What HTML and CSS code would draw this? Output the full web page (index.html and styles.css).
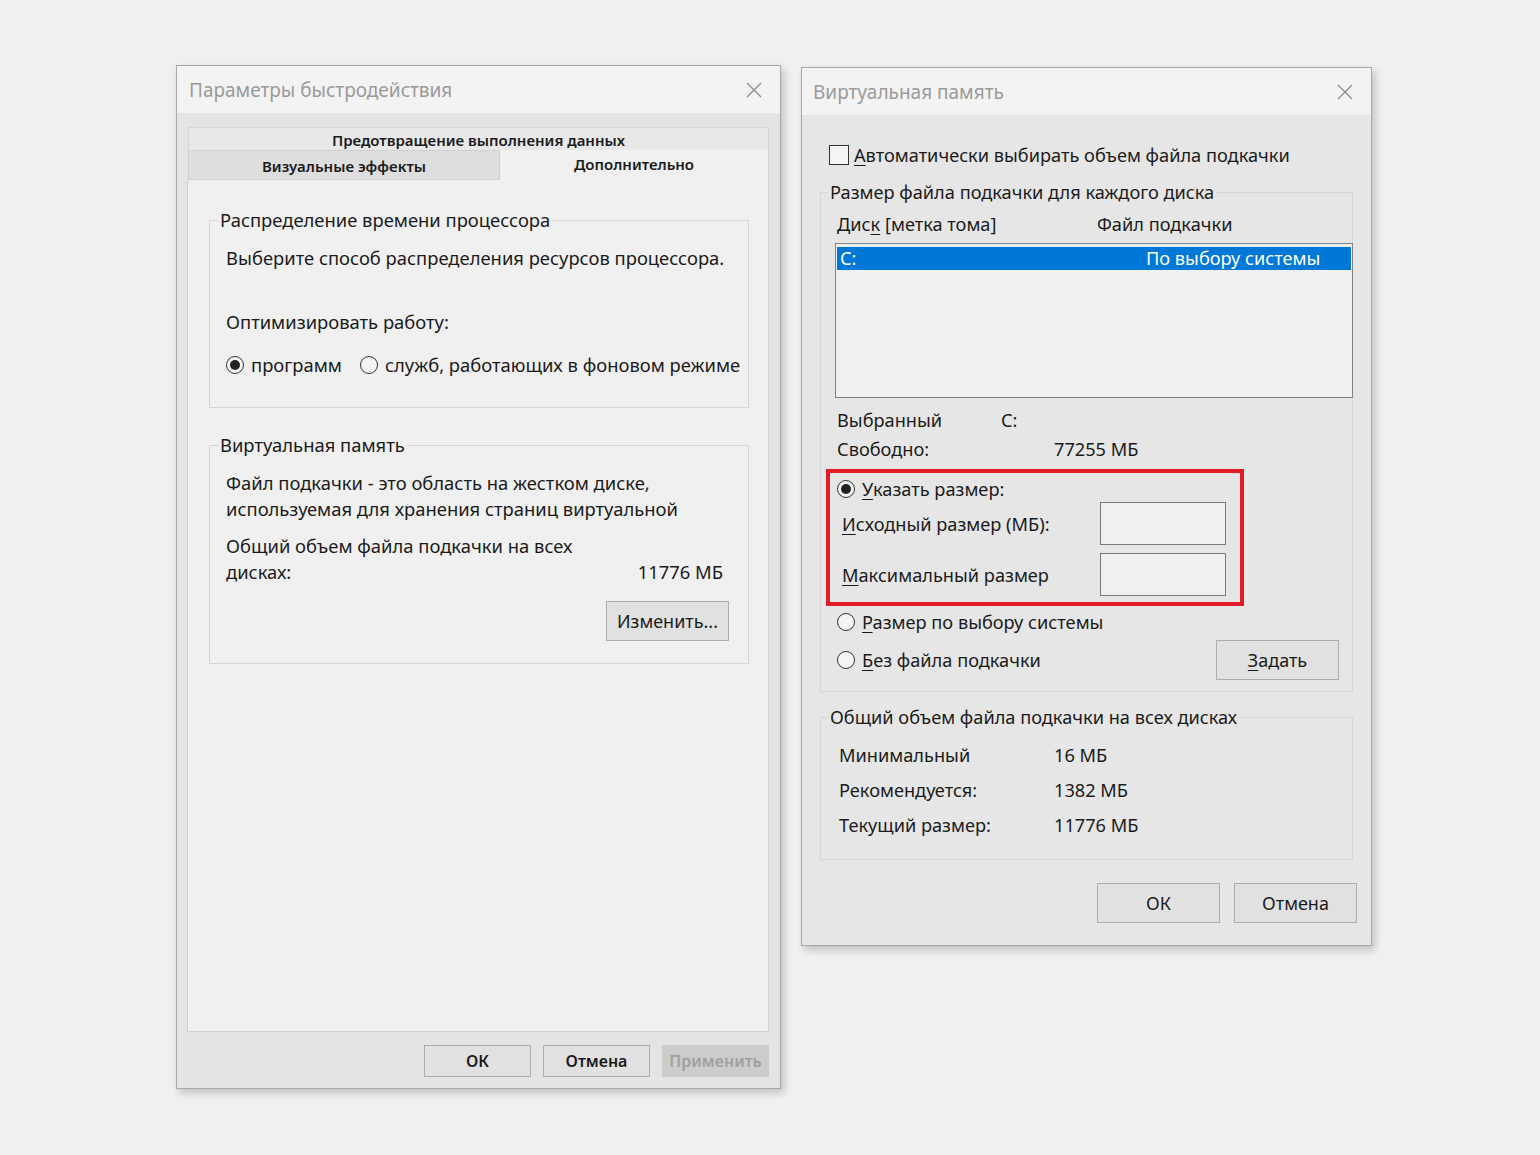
FILE: index.html
```html
<!DOCTYPE html>
<html lang="ru">
<head>
    <meta charset="UTF-8">
    <title>Параметры быстродействия</title>
    <link rel="stylesheet" href="styles.css">
</head>
<body>
    <div class="desk">
        <!-- Performance options dialog -->
        <div class="dialog perf">
            <div class="titlebar">
                <span class="title">Параметры быстродействия</span>
                <svg class="close" viewBox="0 0 16 16"><path d="M1 1L15 15M15 1L1 15"/></svg>
            </div>
            <div class="dialog-body">
                <div class="tabs">
                    <div class="tab tab-wide">Предотвращение выполнения данных</div>
                    <div class="tab-row">
                        <div class="tab tab-visual">Визуальные эффекты</div>
                        <div class="tab tab-active">Дополнительно</div>
                    </div>
                </div>
                <div class="tab-panel">
                    <fieldset class="group cpu">
                        <legend>Распределение времени процессора</legend>
                        <p class="cpu-text">Выберите способ распределения ресурсов процессора.</p>
                        <p class="cpu-opt">Оптимизировать работу:</p>
                        <div class="cpu-radios">
                            <label class="radio-line"><span class="radio checked"></span>программ</label>
                            <label class="radio-line"><span class="radio"></span>служб, работающих в фоновом режиме</label>
                        </div>
                    </fieldset>
                    <fieldset class="group vm">
                        <legend>Виртуальная память</legend>
                        <p class="vm-text">Файл подкачки - это область на жестком диске,<br>используемая для хранения страниц виртуальной</p>
                        <div class="vm-total">
                            <div>Общий объем файла подкачки на всех</div>
                            <div class="vm-total-row"><span>дисках:</span><span>11776 МБ</span></div>
                        </div>
                        <div class="vm-actions">
                            <button class="btn btn-big">Изменить...</button>
                        </div>
                    </fieldset>
                </div>
                <div class="footer perf-footer">
                    <button class="btn btn-small">ОК</button>
                    <button class="btn btn-small">Отмена</button>
                    <button class="btn btn-small disabled">Применить</button>
                </div>
            </div>
        </div>

        <!-- Virtual memory dialog -->
        <div class="dialog vmem">
            <div class="titlebar">
                <span class="title">Виртуальная память</span>
                <svg class="close" viewBox="0 0 16 16"><path d="M1 1L15 15M15 1L1 15"/></svg>
            </div>
            <div class="dialog-body vmem-body">
                <label class="check-line"><span class="checkbox"></span><span><u>А</u>втоматически выбирать объем файла подкачки</span></label>

                <fieldset class="group drives">
                    <legend>Размер файла подкачки для каждого диска</legend>
                    <div class="list-head"><span>Дис<u>к</u> [метка тома]</span><span>Файл подкачки</span></div>
                    <div class="drive-list">
                        <div class="drive-row selected"><span>C:</span><span>По выбору системы</span></div>
                    </div>
                    <div class="info-row first"><span>Выбранный</span><span>C:</span></div>
                    <div class="info-row"><span>Свободно:</span><span>77255 МБ</span></div>

                    <div class="highlight">
                        <label class="radio-line"><span class="radio checked"></span><span><u>У</u>казать размер:</span></label>
                        <div class="size-row first"><span class="size-label"><u>И</u>сходный размер (МБ):</span><span class="size-input"></span></div>
                        <div class="size-row"><span class="size-label"><u>М</u>аксимальный размер</span><span class="size-input"></span></div>
                    </div>

                    <label class="radio-line sys"><span class="radio"></span><span><u>Р</u>азмер по выбору системы</span></label>
                    <div class="nofile-row">
                        <label class="radio-line"><span class="radio"></span><span><u>Б</u>ез файла подкачки</span></label>
                        <button class="btn btn-big set"><u>З</u>адать</button>
                    </div>
                </fieldset>

                <fieldset class="group totals">
                    <legend>Общий объем файла подкачки на всех дисках</legend>
                    <div class="total-row first"><span>Минимальный</span><span>16 МБ</span></div>
                    <div class="total-row"><span>Рекомендуется:</span><span>1382 МБ</span></div>
                    <div class="total-row"><span>Текущий размер:</span><span>11776 МБ</span></div>
                </fieldset>

                <div class="footer vmem-footer">
                    <button class="btn btn-big">ОК</button>
                    <button class="btn btn-big">Отмена</button>
                </div>
            </div>
        </div>
    </div>
</body>
</html>
```

FILE: styles.css
```css
* {
    box-sizing: border-box;
}

body {
    margin: 0;
    background-color: #f0f0f0;
    font-family: "Noto Sans", "Open Sans", sans-serif;
    font-size: 18px;
    color: #1b1b1b;
}

p {
    margin: 0;
}

u {
    text-decoration-thickness: 1px;
    text-underline-offset: 3px;
}

.desk {
    display: flex;
    align-items: flex-start;
    gap: 20px;
    padding: 65px 0 0 176px;
    height: 1155px;
}

/* Dialog frame */
.dialog {
    display: flex;
    flex-direction: column;
    border: 1px solid #a8a8a8;
    background-color: #e4e4e4;
    box-shadow: 3px 4px 8px rgba(0,0,0,0.2);
}

.perf {
    width: 605px;
    height: 1024px;
}

.vmem {
    width: 571px;
    height: 879px;
    margin-top: 2px;
}

.titlebar {
    flex: none;
    height: 47px;
    display: flex;
    align-items: center;
    justify-content: space-between;
    padding: 0 18px 0 12px;
    background-color: #f3f3f3;
}

.vmem .titlebar {
    padding-left: 11px;
}

.title {
    font-size: 19px;
    color: #9a9a9a;
}

.close {
    width: 16px;
    height: 16px;
    fill: none;
    stroke: #8c8c8c;
    stroke-width: 1.3;
}

.dialog-body {
    flex: 1;
    display: flex;
    flex-direction: column;
    padding: 14px 11px 11px 10px;
}

/* Tabs */
.tabs {
    font-size: 15px;
    font-weight: 600;
}

.tab {
    display: flex;
    justify-content: center;
}

.tab-wide {
    height: 23px;
    margin-left: 1px;
    align-items: flex-end;
    border: 1px solid #d6d6d6;
    border-bottom: none;
    background-color: #e8e8e8;
}

.tab-row {
    display: flex;
    height: 30px;
}

.tab-visual {
    width: 312px;
    margin-left: 1px;
    align-items: center;
    padding-top: 2px;
    border: 1px solid #d0d0d0;
    background-color: #dedede;
}

.tab-active {
    flex: 1;
    align-items: center;
    padding-bottom: 2px;
    border-right: 1px solid #d0d0d0;
    background-color: #f0f0f0;
}

.tab-panel {
    flex: 1;
    padding: 28px 19px 0 21px;
    border: 1px solid #d0d0d0;
    border-top: none;
    background-color: #f0f0f0;
    font-size: 18.4px;
}

/* Group boxes */
.group {
    margin: 0;
    padding: 0 24px 0 16px;
    border: 1px solid #d6d6d6;
}

.group legend {
    margin-left: -8px;
    padding: 0 2px;
    line-height: 24px;
}

.cpu {
    padding-bottom: 30px;
    line-height: 24px;
}

.cpu-text {
    margin-top: 14px;
    white-space: nowrap;
}

.cpu-opt {
    margin-top: 40px;
}

.cpu-radios {
    display: flex;
    gap: 18px;
    margin-top: 19px;
    margin-right: -24px;
    white-space: nowrap;
}

.radio-line {
    display: flex;
    align-items: center;
    gap: 7px;
    line-height: 24px;
}

.radio {
    position: relative;
    width: 18px;
    height: 18px;
    flex: none;
    border: 1px solid #333;
    border-radius: 50%;
    background-color: #f4f4f4;
}

.radio.checked::after {
    content: "";
    position: absolute;
    top: 3px;
    left: 3px;
    width: 10px;
    height: 10px;
    border-radius: 50%;
    background-color: #222;
}

.vm {
    margin-top: 25px;
    padding-right: 25px;
    padding-bottom: 22px;
    line-height: 26px;
}

.vm-text {
    margin-top: 13px;
}

.vm-total {
    margin-top: 11px;
}

.vm-total-row {
    display: flex;
    justify-content: space-between;
}

.vm-actions {
    display: flex;
    justify-content: flex-end;
    margin: 16px -6px 0 0;
}

/* Buttons */
.btn {
    font-family: inherit;
    color: #1b1b1b;
    border: 1px solid #adadad;
    background-color: #e1e1e1;
    padding: 0;
}

.btn-big {
    width: 123px;
    height: 40px;
    font-size: 18px;
}

.btn-small {
    width: 107px;
    height: 32px;
    font-size: 16px;
    font-weight: 600;
}

.btn.disabled {
    color: #a0a0a0;
    border-color: #cccccc;
    background-color: #cccccc;
}

.footer {
    display: flex;
    justify-content: flex-end;
}

.perf-footer {
    gap: 12px;
    margin-top: 13px;
}

/* Virtual memory dialog */
.vmem-body {
    padding: 28px 18px 0 18px;
    background-color: #e6e6e6;
    font-size: 18.2px;
}

.check-line {
    display: flex;
    align-items: center;
    gap: 5px;
    margin-left: 9px;
    line-height: 24px;
}

.checkbox {
    width: 20px;
    height: 20px;
    border: 1px solid #333;
    background-color: #f4f4f4;
}

.drives {
    margin-top: 13px;
    padding: 0 16px 11px 16px;
    line-height: 24px;
}

.drives legend {
    margin-left: -9px;
}

.list-head {
    display: grid;
    grid-template-columns: 260px 1fr;
    margin-top: 8px;
}

.drive-list {
    height: 155px;
    margin: 7px -17px 0 -2px;
    padding: 3px 1px;
    border: 1px solid #828282;
    background-color: #f0f0f0;
}

.drive-row {
    display: grid;
    grid-template-columns: 306px 1fr;
    height: 23px;
    padding-left: 3px;
    line-height: 23px;
}

.drive-row.selected {
    background-color: #0078d7;
    color: #ffffff;
}

.info-row {
    display: grid;
    grid-template-columns: 217px 1fr;
    margin-top: 5px;
}

.info-row.first {
    margin-top: 10px;
    grid-template-columns: 164px 1fr;
}

.highlight {
    margin: 8px 0 0 -11px;
    width: 418px;
    padding: 4px 0 6px 7px;
    border: 4px solid #e21b26;
}

.size-row {
    display: flex;
    align-items: center;
    height: 43px;
    margin-top: 8px;
    padding-left: 5px;
}

.size-row.first {
    margin-top: 1px;
}

.size-label {
    width: 258px;
}

.size-input {
    width: 126px;
    height: 43px;
    border: 1px solid #7a7a7a;
    background-color: #f0f0f0;
}

.radio-line.sys {
    margin-top: 4px;
}

.nofile-row {
    display: flex;
    align-items: center;
    justify-content: space-between;
    margin: 6px -3px 0 0;
}

.totals {
    margin-top: 13px;
    padding: 0 16px 16px 18px;
}

.totals legend {
    margin-left: -11px;
}

.total-row {
    display: grid;
    grid-template-columns: 215px 1fr;
    line-height: 35px;
}

.total-row.first {
    margin-top: 9px;
}

.vmem-footer {
    gap: 14px;
    margin: 23px -4px 0 0;
}
```
